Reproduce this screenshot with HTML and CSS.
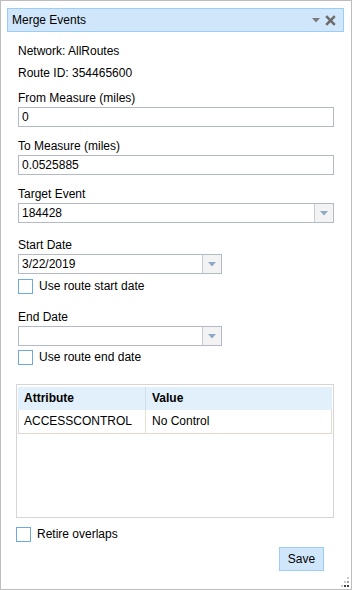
FILE: index.html
```html
<!DOCTYPE html>
<html lang="en">
<head>
    <meta charset="UTF-8">
    <title>Merge Events</title>
    <link rel="stylesheet" href="styles.css">
</head>
<body>
    <div class="panel">
        <div class="titlebar">
            <span class="title">Merge Events</span>
            <span class="tools">
                <svg class="menu-icon" width="8" height="5" viewBox="0 0 8 5"><path d="M0 0h8L4 4.5z" fill="#7a7a7a"/></svg>
                <svg class="close-icon" width="11" height="11" viewBox="0 0 11 11"><path d="M1.2 1.2l8.6 8.6M9.8 1.2l-8.6 8.6" stroke="#6c6c6c" stroke-width="2.6"/></svg>
            </span>
        </div>

        <div class="content">
            <div class="info first">Network: AllRoutes</div>
            <div class="info">Route ID: 354465600</div>

            <div class="label l-from">From Measure (miles)</div>
            <div class="textbox">0</div>

            <div class="label">To Measure (miles)</div>
            <div class="textbox">0.0525885</div>

            <div class="label">Target Event</div>
            <div class="combo full">
                <span class="combo-value">184428</span>
                <span class="combo-arrow"><svg width="8" height="5" viewBox="0 0 8 5"><path d="M0 0h8L4 4.5z" fill="#8fa9c9"/></svg></span>
            </div>

            <div class="label l-start">Start Date</div>
            <div class="combo date">
                <span class="combo-value">3/22/2019</span>
                <span class="combo-arrow"><svg width="8" height="5" viewBox="0 0 8 5"><path d="M0 0h8L4 4.5z" fill="#8fa9c9"/></svg></span>
            </div>
            <div class="check c-start"><span class="box"></span>Use route start date</div>

            <div class="label l-end">End Date</div>
            <div class="combo date">
                <span class="combo-value"></span>
                <span class="combo-arrow"><svg width="8" height="5" viewBox="0 0 8 5"><path d="M0 0h8L4 4.5z" fill="#8fa9c9"/></svg></span>
            </div>
            <div class="check c-end"><span class="box"></span>Use route end date</div>

            <div class="grid">
                <div class="grid-head">
                    <div class="cell col-a">Attribute</div>
                    <div class="cell col-b">Value</div>
                </div>
                <div class="grid-row">
                    <div class="cell col-a">ACCESSCONTROL</div>
                    <div class="cell col-b">No Control</div>
                </div>
            </div>

            <div class="check c-retire"><span class="box"></span>Retire overlaps</div>

            <div class="actions">
                <button class="save">Save</button>
            </div>
        </div>

        <svg class="grip" width="12" height="12" viewBox="0 0 12 12">
            <rect x="9" y="1" width="2" height="2" fill="#c8c8c8"/>
            <rect x="6" y="5" width="2" height="2" fill="#c8c8c8"/>
            <rect x="9" y="5" width="2" height="2" fill="#a0a0a0"/>
            <rect x="3" y="9" width="2" height="2" fill="#c8c8c8"/>
            <rect x="6" y="9" width="2" height="2" fill="#404040"/>
            <rect x="9" y="9" width="2" height="2" fill="#404040"/>
        </svg>
    </div>
</body>
</html>
```

FILE: styles.css
```css
body {
    margin: 0;
    padding: 0;
    background: #fff;
}
.panel {
    position: relative;
    width: 352px;
    height: 590px;
    box-sizing: border-box;
    border: 1px solid #bdbdbd;
    padding: 7px 7px 0 6px;
    font-family: "Liberation Sans", Arial, sans-serif;
    font-size: 12px;
    color: #000;
    background: #fff;
}
.titlebar {
    display: flex;
    align-items: center;
    justify-content: space-between;
    height: 24px;
    box-sizing: border-box;
    border: 1px solid #9dcdf3;
    background: #d0e7fb;
    padding: 0 7px 0 4px;
}
.tools {
    display: flex;
    align-items: center;
}
.menu-icon {
    margin-right: 5px;
}
.content {
    width: 316px;
    margin-left: 11px;
}
.info, .label {
    line-height: 14px;
}
.info {
    margin-top: 8px;
}
.info.first {
    margin-top: 12px;
}
.label {
    margin-top: 12px;
}
.l-from {
    margin-top: 11px;
}
.l-start {
    margin-top: 15px;
}
.l-end {
    margin-top: 16px;
}
.textbox, .combo {
    margin-top: 2px;
    height: 20px;
    box-sizing: border-box;
    border: 1px solid #b3bac6;
    background: #fff;
    line-height: 18px;
}
.textbox {
    padding-left: 3px;
}
.combo {
    display: flex;
}
.combo.date {
    width: 204px;
}
.combo-value {
    flex: 1;
    padding-left: 3px;
}
.combo-arrow {
    width: 18px;
    display: flex;
    align-items: center;
    justify-content: center;
    border-left: 1px solid #c6ccd5;
    background: #f3f3f3;
}
.check {
    display: flex;
    align-items: center;
    height: 15px;
    line-height: 15px;
}
.box {
    width: 15px;
    height: 15px;
    box-sizing: border-box;
    border: 1px solid #6eaade;
    background: #fff;
    margin-right: 6px;
}
.c-start {
    margin-top: 5px;
}
.c-end {
    margin-top: 4px;
}
.grid {
    margin: 19px 0 0 -2px;
    width: 318px;
    height: 134px;
    box-sizing: border-box;
    border: 1px solid #d5d5d5;
    padding: 2px 1px 0 1px;
}
.grid-head, .grid-row {
    display: flex;
}
.grid-head {
    height: 23px;
    background: #e2f0fb;
    font-weight: bold;
    line-height: 23px;
}
.grid-head .col-a {
    border-right: 1px solid #cfdde9;
}
.grid-row {
    height: 24px;
    line-height: 23px;
    box-sizing: border-box;
    border-left: 1px solid #dcdcdc;
    border-right: 1px solid #e2d8cc;
    border-bottom: 1px solid #e2d8cc;
}
.grid-row .col-a {
    border-right: 1px solid #e8dfd4;
}
.cell {
    box-sizing: border-box;
}
.col-a {
    width: 128px;
    padding-left: 6px;
}
.grid-row .col-a {
    width: 127px;
    padding-left: 5px;
}
.col-b {
    flex: 1;
    padding-left: 6px;
}
.c-retire {
    margin: 9px 0 0 -2px;
}
.actions {
    display: flex;
    justify-content: flex-end;
    margin-top: 5px;
    padding-right: 10px;
}
.save {
    width: 45px;
    height: 24px;
    box-sizing: border-box;
    border: 1px solid #9dcdf3;
    background: #d0e7fb;
    font-family: "Liberation Sans", Arial, sans-serif;
    font-size: 12px;
    color: #000;
    padding: 0;
    cursor: pointer;
}
.grip {
    position: absolute;
    right: 1px;
    bottom: 1px;
}
```
